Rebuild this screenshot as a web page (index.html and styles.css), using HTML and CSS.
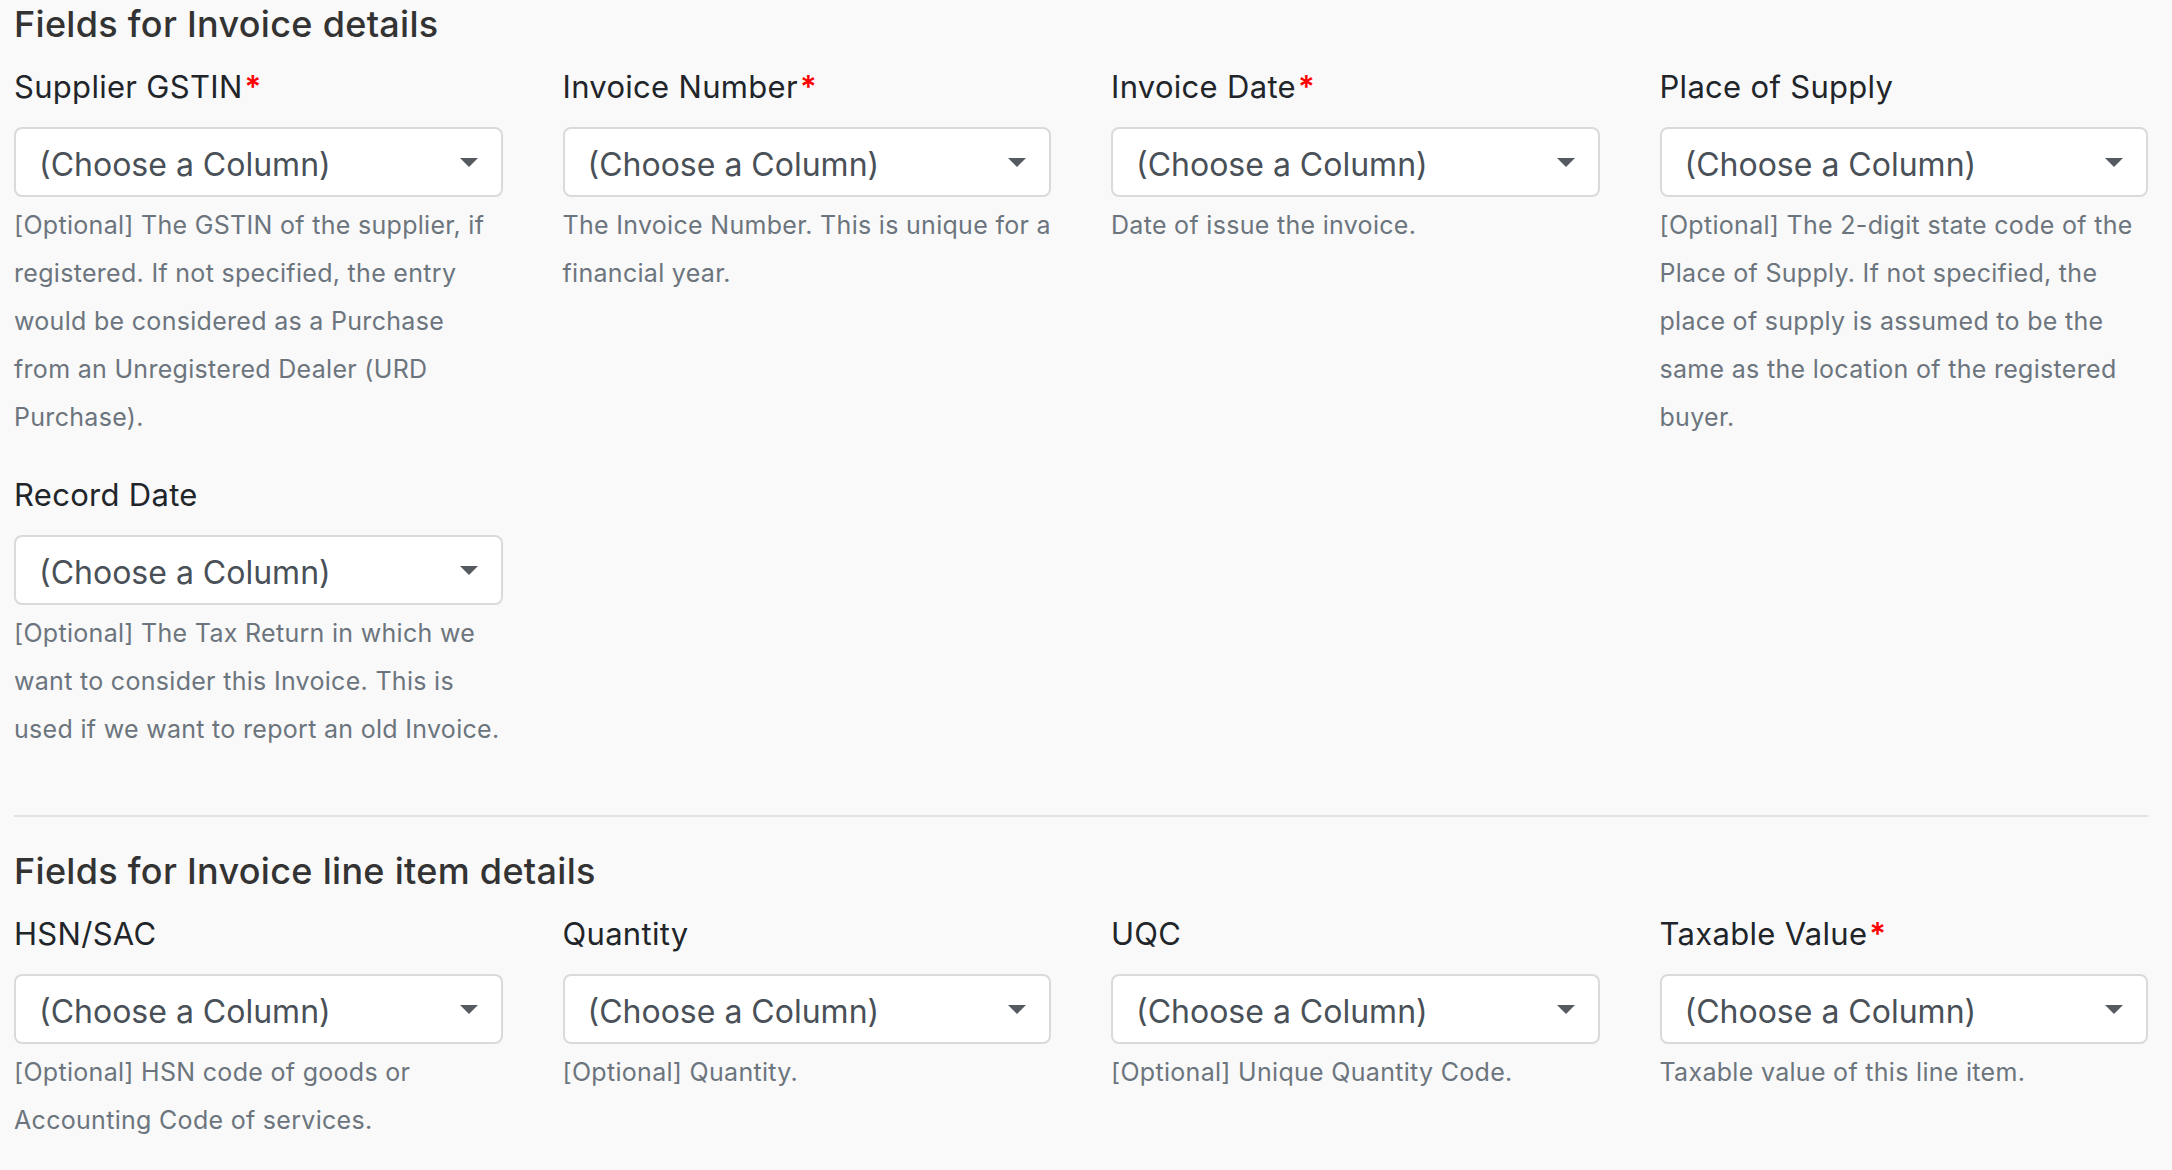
FILE: index.html
```html
<!DOCTYPE html>
<html>
<head>
<meta charset="utf-8">
<link rel="stylesheet" href="styles.css">
</head>
<body>
<div class="page">
  <section class="group">
    <h2 class="group-title">Fields for Invoice details</h2>
    <div class="fields">
      <div class="field">
        <label class="field-label">Supplier GSTIN<span class="req">*</span></label>
        <div class="select"><span class="select-text">(Choose a Column)</span><svg class="caret" viewBox="0 0 18 9"><path d="M0 0H18L9 9Z"/></svg></div>
        <p class="help">[Optional] The GSTIN of the supplier, if registered. If not specified, the entry would be considered as a Purchase from an Unregistered Dealer (URD Purchase).</p>
      </div>
      <div class="field">
        <label class="field-label">Invoice Number<span class="req">*</span></label>
        <div class="select"><span class="select-text">(Choose a Column)</span><svg class="caret" viewBox="0 0 18 9"><path d="M0 0H18L9 9Z"/></svg></div>
        <p class="help">The Invoice Number. This is unique for a financial year.</p>
      </div>
      <div class="field">
        <label class="field-label">Invoice Date<span class="req">*</span></label>
        <div class="select"><span class="select-text">(Choose a Column)</span><svg class="caret" viewBox="0 0 18 9"><path d="M0 0H18L9 9Z"/></svg></div>
        <p class="help">Date of issue the invoice.</p>
      </div>
      <div class="field">
        <label class="field-label">Place of Supply</label>
        <div class="select"><span class="select-text">(Choose a Column)</span><svg class="caret" viewBox="0 0 18 9"><path d="M0 0H18L9 9Z"/></svg></div>
        <p class="help">[Optional] The 2-digit state code of the Place of Supply. If not specified, the place of supply is assumed to be the same as the location of the registered buyer.</p>
      </div>
      <div class="field">
        <label class="field-label">Record Date</label>
        <div class="select"><span class="select-text">(Choose a Column)</span><svg class="caret" viewBox="0 0 18 9"><path d="M0 0H18L9 9Z"/></svg></div>
        <p class="help">[Optional] The Tax Return in which we want to consider this Invoice. This is used if we want to report an old Invoice.</p>
      </div>
    </div>
  </section>
  <hr class="divider">
  <section class="group">
    <h2 class="group-title">Fields for Invoice line item details</h2>
    <div class="fields">
      <div class="field">
        <label class="field-label">HSN/SAC</label>
        <div class="select"><span class="select-text">(Choose a Column)</span><svg class="caret" viewBox="0 0 18 9"><path d="M0 0H18L9 9Z"/></svg></div>
        <p class="help">[Optional] HSN code of goods or Accounting Code of services.</p>
      </div>
      <div class="field">
        <label class="field-label">Quantity</label>
        <div class="select"><span class="select-text">(Choose a Column)</span><svg class="caret" viewBox="0 0 18 9"><path d="M0 0H18L9 9Z"/></svg></div>
        <p class="help">[Optional] Quantity.</p>
      </div>
      <div class="field">
        <label class="field-label">UQC</label>
        <div class="select"><span class="select-text">(Choose a Column)</span><svg class="caret" viewBox="0 0 18 9"><path d="M0 0H18L9 9Z"/></svg></div>
        <p class="help">[Optional] Unique Quantity Code.</p>
      </div>
      <div class="field">
        <label class="field-label">Taxable Value<span class="req">*</span></label>
        <div class="select"><span class="select-text">(Choose a Column)</span><svg class="caret" viewBox="0 0 18 9"><path d="M0 0H18L9 9Z"/></svg></div>
        <p class="help">Taxable value of this line item.</p>
      </div>
    </div>
  </section>
</div>
</body>
</html>
```
FILE: styles.css
```css
html, body {
  margin: 0;
  padding: 0;
  background: #f9f9f9;
}
body {
  font-family: Inter, "Noto Sans", "Liberation Sans", sans-serif;
  color: #212529;
}
.page {
  padding: 3px 24px 0 14px;
}
.group-title {
  margin: 0;
  font-size: 36px;
  line-height: 42px;
  font-weight: 500;
  color: #333;
  letter-spacing: 0.3px;
}
.fields {
  display: grid;
  grid-template-columns: repeat(4, 1fr);
  column-gap: 60px;
  row-gap: 34px;
  margin-top: 22px;
}
.field-label {
  display: block;
  font-size: 31px;
  line-height: 40px;
  font-weight: 400;
  color: #212529;
  letter-spacing: 0.3px;
}
.req {
  color: #f00;
  font-weight: 600;
  margin-left: 2px;
}
.select {
  position: relative;
  margin-top: 20px;
  height: 70px;
  box-sizing: border-box;
  background: #fff;
  border: 2px solid #dadada;
  border-radius: 8px;
  padding-left: 23px;
  display: flex;
  align-items: center;
}
.select-text {
  font-size: 32px;
  color: #495057;
  padding-top: 4px;
}
.caret {
  position: absolute;
  right: 23px;
  top: 29px;
  width: 18px;
  height: 9px;
  fill: #555b61;
}
.help {
  margin: 4px 0 0;
  font-size: 25px;
  line-height: 48px;
  color: #6c757d;
  letter-spacing: 0.3px;
}
.divider {
  margin: 62px 0 33px;
  border: 0;
  border-top: 2px solid #e3e3e3;
}
```
